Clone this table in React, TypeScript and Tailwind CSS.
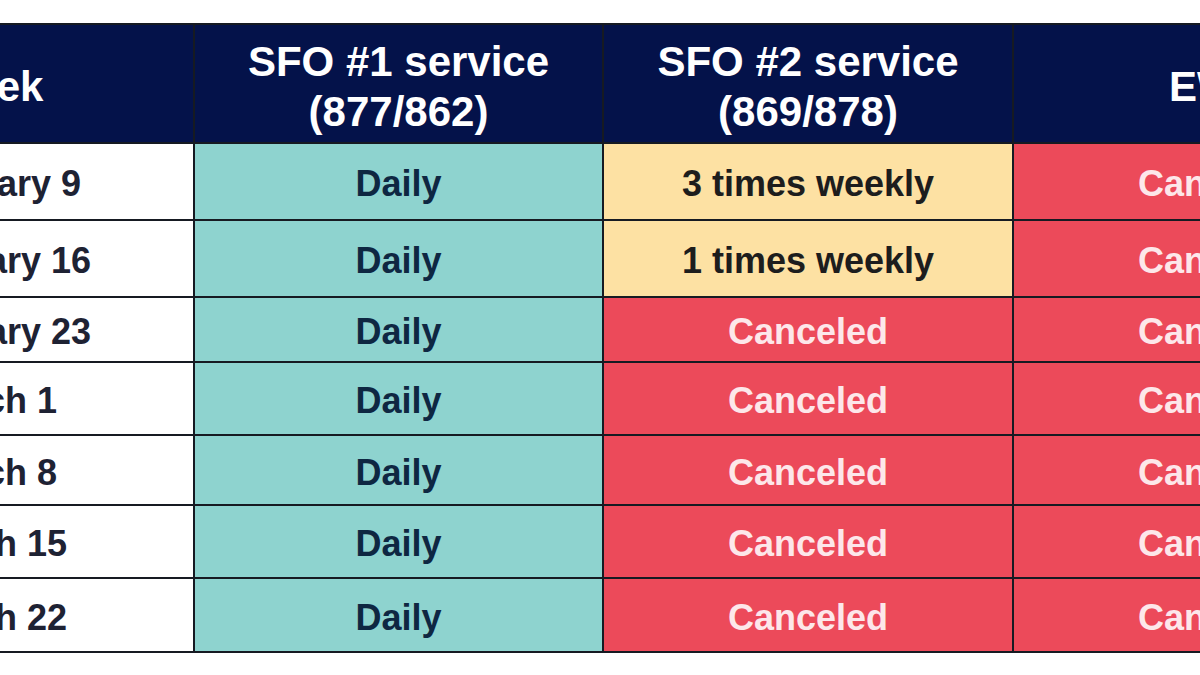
import React from 'react';

type Status = 'daily' | 'weekly' | 'canceled';

type Row = {
	week: string,
	h: string,
	sfo1: [Status, string],
	sfo2: [Status, string],
	ewr: [Status, string],
}

const rows: Row[] = [
	{ week: 'February 9', h: 'h-[75px]', sfo1: ['daily', 'Daily'], sfo2: ['weekly', '3 times weekly'], ewr: ['canceled', 'Canceled'] },
	{ week: 'February 16', h: 'h-[75px]', sfo1: ['daily', 'Daily'], sfo2: ['weekly', '1 times weekly'], ewr: ['canceled', 'Canceled'] },
	{ week: 'February 23', h: 'h-[63px]', sfo1: ['daily', 'Daily'], sfo2: ['canceled', 'Canceled'], ewr: ['canceled', 'Canceled'] },
	{ week: 'March 1', h: 'h-[71px]', sfo1: ['daily', 'Daily'], sfo2: ['canceled', 'Canceled'], ewr: ['canceled', 'Canceled'] },
	{ week: 'March 8', h: 'h-[68px]', sfo1: ['daily', 'Daily'], sfo2: ['canceled', 'Canceled'], ewr: ['canceled', 'Canceled'] },
	{ week: 'March 15', h: 'h-[71px]', sfo1: ['daily', 'Daily'], sfo2: ['canceled', 'Canceled'], ewr: ['canceled', 'Canceled'] },
	{ week: 'March 22', h: 'h-[72px]', sfo1: ['daily', 'Daily'], sfo2: ['canceled', 'Canceled'], ewr: ['canceled', 'Canceled'] },
];

const tone: Record<Status, string> = {
	daily: 'bg-[#8ed3cf] text-[#0e2742]',
	weekly: 'bg-[#fde1a3] text-[#1d1d1d]',
	canceled: 'bg-[#ec4a5a] text-[#fde7ea]',
};

const Cell = ({ status, text, h }: { status: Status, text: string, h: string }) =>
	<div className={ `${ h } ${ tone[status] } flex items-center justify-center text-[36px] font-bold pt-[5px]` }>
		{ text }
	</div>

const Head = ({ children }: { children: React.ReactNode }) =>
	<div className="h-[117px] bg-[#04124a] text-white flex flex-col items-center justify-center text-[42px] font-bold leading-[50px] pt-[7px] text-center">
		{ children }
	</div>

export default function App() {
	return <div className="w-[1200px] h-[675px] bg-white overflow-hidden pt-[23px]"
		style={ { fontFamily: '"Liberation Sans", Arial, sans-serif' } }>
		<div className="ml-[-217px] w-max grid grid-cols-[408px_407px_408px_408px] gap-[2px] p-[2px] bg-[#161a22]">
			<Head>Week</Head>
			<Head><span>SFO #1 service</span><span>(877/862)</span></Head>
			<Head><span>SFO #2 service</span><span>(869/878)</span></Head>
			<Head>EWR</Head>
			{ rows.map( row => <React.Fragment key={ row.week }>
				<div className={ `${ row.h } bg-white text-[#1e2233] flex items-center justify-center text-[36px] font-bold pt-[5px]` }>
					{ row.week }
				</div>
				<Cell status={ row.sfo1[0] } text={ row.sfo1[1] } h={ row.h } />
				<Cell status={ row.sfo2[0] } text={ row.sfo2[1] } h={ row.h } />
				<Cell status={ row.ewr[0] } text={ row.ewr[1] } h={ row.h } />
			</React.Fragment> ) }
		</div>
	</div>
}
